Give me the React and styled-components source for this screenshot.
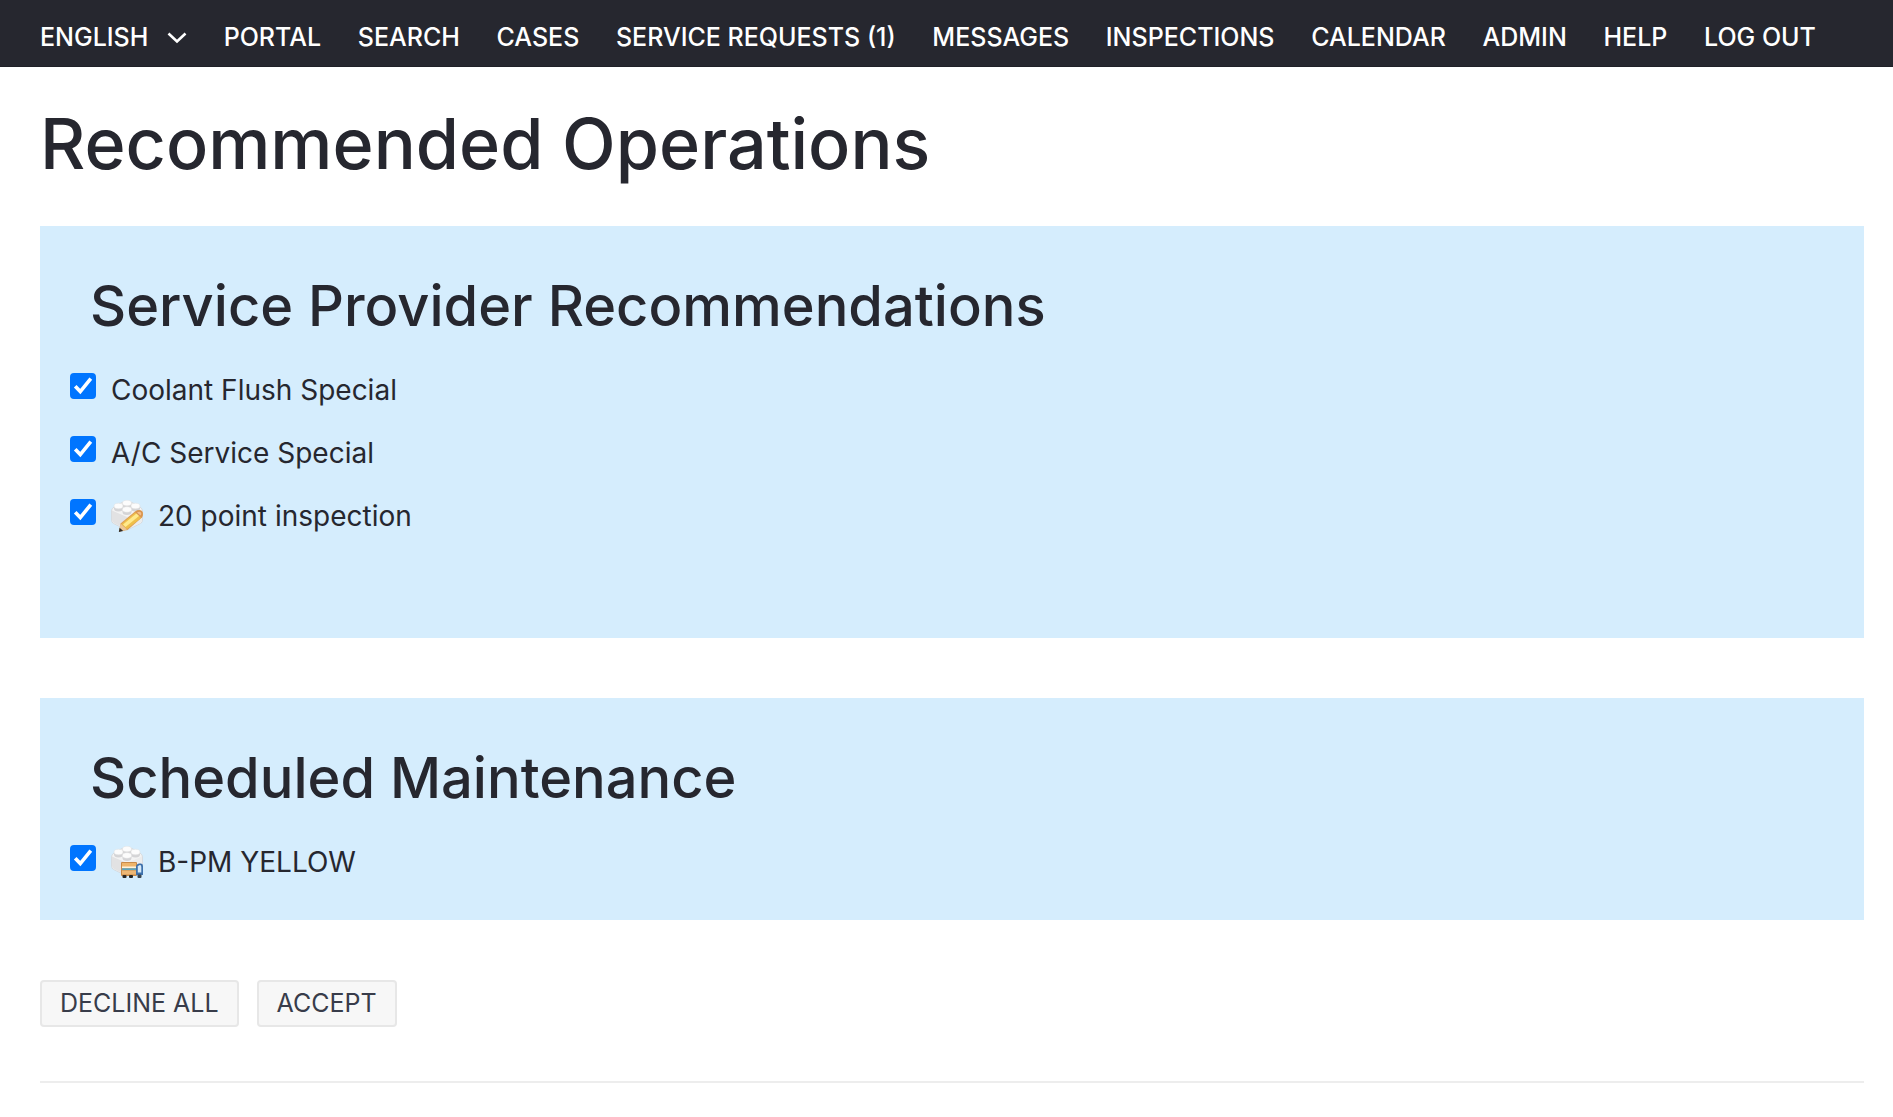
import React from 'react';
import styled, { createGlobalStyle } from 'styled-components';

const GlobalStyle = createGlobalStyle`
    * {
        box-sizing: border-box;
    }

    body {
        margin: 0;
        background: #fff;
        color: #26272f;
        font-family: Inter, 'Liberation Sans', sans-serif;
    }
`

const Nav = styled.nav`
    display: flex;
    justify-content: space-between;
    align-items: center;
    height: 67px;
    padding: 7px 77px 0 40px;
    background: #26272f;
    border-bottom: 1px solid #1f2027;
`

const NavLink = styled.a`
    color: #fff;
    font-size: 25px;
    font-weight: 500;
    line-height: 32px;
    text-decoration: none;
    white-space: nowrap;
`

const Language = styled.div`
    display: flex;
    position: relative;
    align-items: center;

    svg {
        position: absolute;
        right: 0;
        pointer-events: none;
    }
`

const LanguageSelect = styled.select`
    appearance: none;
    margin: 0;
    padding: 0 38px 0 0;
    border: 0;
    background: transparent;
    color: #fff;
    font: 500 25px/32px Inter, 'Liberation Sans', sans-serif;
`

const Main = styled.main`
    padding: 37px 29px 32px 40px;
`

const Title = styled.h1`
    margin: 0 0 42px;
    font-size: 70px;
    font-weight: 500;
    line-height: 80px;
`

const Panel = styled.section`
    margin-bottom: 60px;
    padding: 40px 30px ${props => (props.$tall ? 91 : 27)}px;
    background: #d5edfd;
`

const PanelTitle = styled.h2`
    margin: 0 0 12px;
    padding-left: 20px;
    font-size: 56px;
    font-weight: 500;
    line-height: 80px;
`

const List = styled.ul`
    margin: 0;
    padding: 0;
    list-style: none;
`

const Row = styled.li`
    display: flex;
    align-items: flex-start;
    height: 63px;
    padding-top: 15px;
`

const CheckWrap = styled.span`
    display: grid;
    flex: none;
    margin-right: 15px;

    > * {
        grid-area: 1 / 1;
    }

    svg {
        visibility: hidden;
        pointer-events: none;
    }

    input:checked + svg {
        visibility: visible;
    }
`

const Checkbox = styled.input`
    appearance: none;
    width: 26px;
    height: 26px;
    margin: 0;
    border: 2px solid #767676;
    border-radius: 4px;
    background: #fff;

    &:checked {
        border-color: #0075ff;
        background: #0075ff;
    }
`

const Label = styled.label`
    display: flex;
    align-items: center;
    gap: 15px;
    font-size: 28px;
    line-height: 34px;
`

const Buttons = styled.div`
    display: flex;
    gap: 18px;
    padding-bottom: 54px;
    border-bottom: 2px solid #ededed;
`

const Button = styled.button`
    height: 47px;
    padding: 0 18px 2px;
    border: 2px solid #e7e7e7;
    border-radius: 4px;
    background: #f7f7f7;
    color: #383c4a;
    font: 400 25px/32px Inter, 'Liberation Sans', sans-serif;
`

const Chevron = () => (
    <svg width='20' height='14' viewBox='0 0 20 14' aria-hidden='true'>
        <path d='M1.5 3.5 L10 11.5 L18.5 3.5' fill='none' stroke='#fff' strokeWidth='2.6' />
    </svg>
)

const Check = () => (
    <svg width='26' height='26' viewBox='0 0 26 26' aria-hidden='true'>
        <path d='M5.2 13.2 L10.3 18.6 L20.8 5.6' fill='none' stroke='#fff' strokeWidth='3.6' />
    </svg>
)

const studs = [[16, 3], [7.5, 6], [24.5, 6], [16, 9.5]]

const Brick = () => (
    <g>
        <path d='M3 7 L11 2.5 H21 L29 7 Q31.5 8.5 31.5 11 V20 Q31.5 22.5 29.5 23.5 L16 30 L2.5 23.5 Q0.5 22.5 0.5 20 V11 Q0.5 8.5 3 7 Z' fill='#f3f3f3' stroke='#d3d6d8' strokeWidth='0.8' />
        <path d='M1 10.5 L16 17 V29.5 L3 23 Q1 22 1 20 Z' fill='#e2e2e3' />
        <path d='M16 17 L31 10.5 V20 Q31 22 29 23 L16 29.5 Z' fill='#ececec' />
        {studs.map(([x, y]) => (
            <g key={x + '-' + y}>
                <path d={`M${x - 4.5} ${y} v2.5 a4.5 3 0 0 0 9 0 v-2.5 z`} fill='#d4d4d6' />
                <ellipse cx={x} cy={y} rx='4.5' ry='2.8' fill='#fcfcfc' stroke='#e0e0e0' strokeWidth='0.5' />
            </g>
        ))}
    </g>
)

const InspectionIcon = () => (
    <svg width='32' height='32' viewBox='0 0 32 32' aria-hidden='true'>
        <Brick />
        <path d='M8 31.5 L9.5 23.5 L24 11.5 Q28 9 31 11 Q33 14 31 17.5 L16.5 30 Z' fill='#dda055' />
        <path d='M10.5 24 L24.5 12.5 L30 18 L16 29 Z' fill='#efc04a' />
        <path d='M12 24.5 L25.5 13.5 L28 16 L14.5 27 Z' fill='#ffea8c' />
        <path d='M24 12 Q28 9.5 31 11.5 Q32.5 14 30.5 17.5 Z' fill='#d9944f' />
        <path d='M26 12.5 Q28.5 11 30 12.5 Q31 14 29.5 15.5 Z' fill='#f3c08b' />
        <path d='M8 31.5 L9.5 23.5 L16 29.5 Z' fill='#edc795' />
        <path d='M7.8 32 L8.6 27.8 L12.2 31 Z' fill='#302a25' />
    </svg>
)

const MaintenanceIcon = () => (
    <svg width='32' height='32' viewBox='0 0 32 32' aria-hidden='true'>
        <Brick />
        <rect x='10' y='16' width='16' height='14' rx='1' fill='#c98a48' />
        <rect x='11' y='17' width='14' height='4' fill='#eeb46a' />
        <rect x='11' y='20.5' width='14' height='1.8' fill='#fff2da' />
        <rect x='11' y='22.3' width='14' height='1.8' fill='#5ba4bd' />
        <rect x='11' y='24.5' width='14' height='4' fill='#edb775' />
        <path d='M25 20 Q26 17.5 28 17.5 H30 Q32 17.5 32 20 V29 H25 Z' fill='#3d70ab' />
        <path d='M26.8 20.5 Q27.5 19 29 19 Q30.3 19 30.3 21 V26.5 H26.8 Z' fill='#d6e9f8' />
        <rect x='11.5' y='29' width='4' height='3' rx='1' fill='#252525' />
        <rect x='18' y='29' width='4' height='3' rx='1' fill='#252525' />
        <rect x='26.5' y='28.5' width='4' height='3.5' rx='1' fill='#3b4650' />
    </svg>
)

const links = [
    'PORTAL',
    'SEARCH',
    'CASES',
    'SERVICE REQUESTS (1)',
    'MESSAGES',
    'INSPECTIONS',
    'CALENDAR',
    'ADMIN',
    'HELP',
    'LOG OUT'
]

const Operation = ({ id, name, icon }) => (
    <Row>
        <CheckWrap>
            <Checkbox type='checkbox' id={id} defaultChecked />
            <Check />
        </CheckWrap>
        <Label htmlFor={id}>
            {icon}
            {name}
        </Label>
    </Row>
)

const App = () => {
    return (
        <>
            <GlobalStyle />
            <Nav>
                <Language>
                    <LanguageSelect aria-label='Language'>
                        <option>ENGLISH</option>
                    </LanguageSelect>
                    <Chevron />
                </Language>
                {links.map(link => (
                    <NavLink href='#' key={link}>{link}</NavLink>
                ))}
            </Nav>
            <Main>
                <Title>Recommended Operations</Title>
                <Panel $tall>
                    <PanelTitle>Service Provider Recommendations</PanelTitle>
                    <List>
                        <Operation id='coolant' name='Coolant Flush Special' />
                        <Operation id='ac' name='A/C Service Special' />
                        <Operation id='inspection' name='20 point inspection' icon={<InspectionIcon />} />
                    </List>
                </Panel>
                <Panel>
                    <PanelTitle>Scheduled Maintenance</PanelTitle>
                    <List>
                        <Operation id='bpm' name='B-PM YELLOW' icon={<MaintenanceIcon />} />
                    </List>
                </Panel>
                <Buttons>
                    <Button type='button'>DECLINE ALL</Button>
                    <Button type='button'>ACCEPT</Button>
                </Buttons>
            </Main>
        </>
    )
}

export default App;
